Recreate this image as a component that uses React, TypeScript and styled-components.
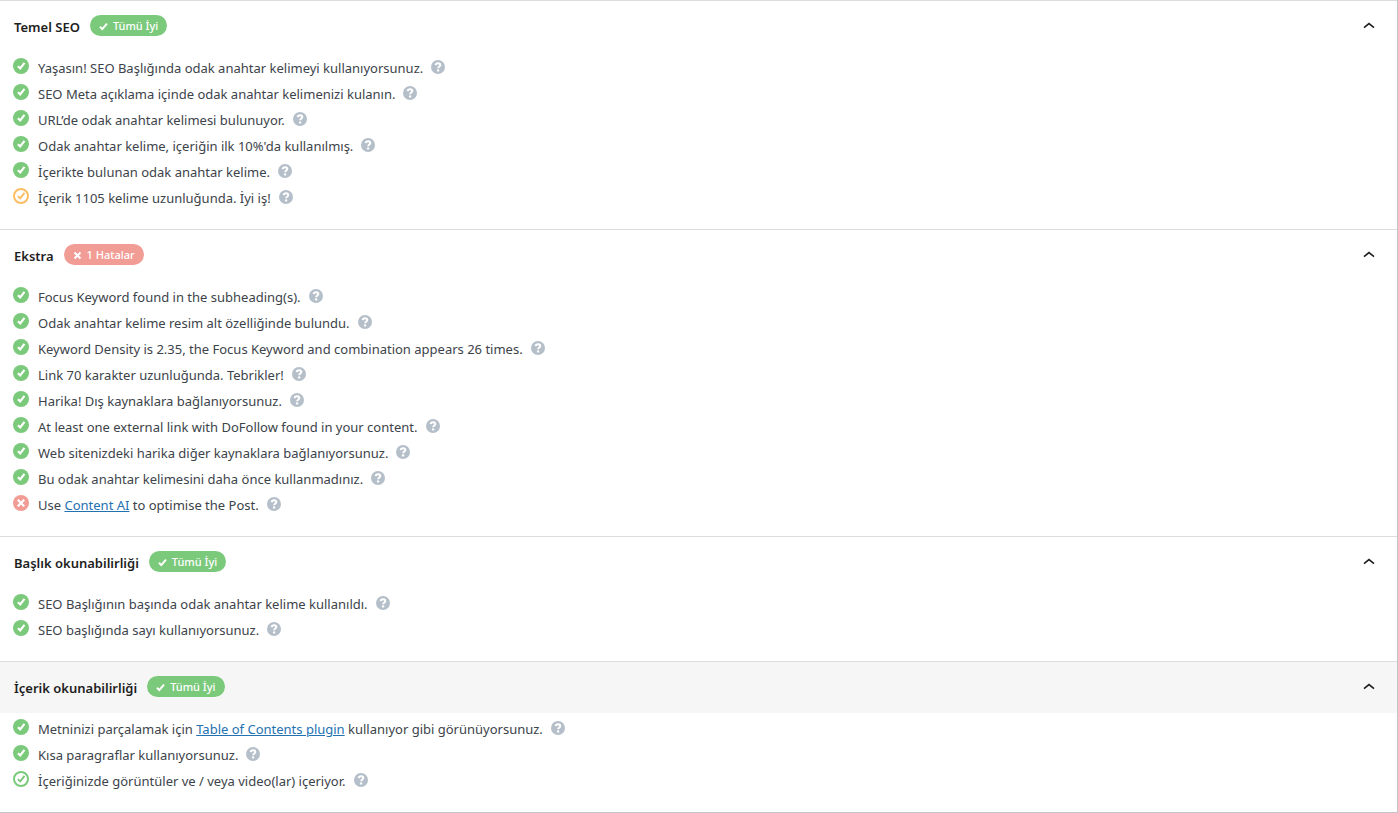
import React, { useState } from "react";
import styled, { createGlobalStyle } from "styled-components";

type Status = "ok" | "ok-outline" | "warn-outline" | "fail";

const colors = {
  green: "#7bc97b",
  orange: "#fdbd63",
  red: "#f29c96",
  help: "#b5bfc9",
  link: "#2271b1",
};

const GlobalStyle = createGlobalStyle`
  * { box-sizing: border-box; }
  body {
    margin: 0;
    background: #f0f0f1;
    color: #3c434a;
    font-family: "Segoe UI", "Noto Sans", "Open Sans", sans-serif;
    font-size: 13px;
  }
`;

const Panel = styled.main`
  background: #fff;
  border-right: 1px solid #c3c4c7;
  border-bottom: 1px solid #c3c4c7;
`;

const Section = styled.section`
  border-top: 1px solid #dcdcde;
`;

const Heading = styled.h2`
  margin: 0;
  font: inherit;
`;

const Toggle = styled.button<{ $active?: boolean }>`
  display: flex;
  align-items: center;
  gap: 10px;
  width: 100%;
  height: 51px;
  padding: 0 22px 2px 14px;
  border: 0;
  background: ${(p) => (p.$active ? "#f6f6f6" : "transparent")};
  color: #1e1e1e;
  font: inherit;
  text-align: left;
  cursor: pointer;
`;

const Title = styled.span`
  padding-top: 2px;
  font-weight: 600;
  line-height: 20px;
`;

const Badge = styled.span<{ $bad?: boolean }>`
  display: inline-flex;
  align-items: center;
  gap: 5px;
  height: 21px;
  padding: 0 9px;
  border-radius: 11px;
  background: ${(p) => (p.$bad ? colors.red : colors.green)};
  color: #fff;
  font-size: 11px;
  font-weight: 500;
  line-height: 21px;
`;

const BadgeIcon = styled.svg`
  margin-top: 2px;
`;

const Chevron = styled.svg<{ $open: boolean }>`
  margin-left: auto;
  transform: ${(p) => (p.$open ? "none" : "rotate(180deg)")};
`;

const List = styled.ul`
  margin: 0;
  padding: 2px 13px 19px;
  list-style: none;
`;

const Row = styled.li`
  display: flex;
  align-items: center;
  height: 26px;
`;

const StatusSvg = styled.svg`
  flex: none;
  margin: 0 9px 2px 0;
`;

const Message = styled.span`
  padding-top: 2px;
  line-height: 20px;
`;

const TextLink = styled.a`
  color: ${colors.link};
  text-decoration: underline;
`;

const Help = styled.a`
  display: flex;
  margin-left: 8px;
`;

const CHECK = "M4.9 8.2 7.2 10.4 11.5 4.8";

function StatusIcon({ status }: { status: Status }) {
  if (status === "ok" || status === "fail") {
    return (
      <StatusSvg width="16" height="16" viewBox="0 0 16 16" aria-hidden="true">
        <circle cx="8" cy="8" r="8" fill={status === "ok" ? colors.green : colors.red} />
        <path
          d={status === "ok" ? CHECK : "M4.8 4.8l6.4 6.4M11.2 4.8l-6.4 6.4"}
          fill="none"
          stroke="#fff"
          strokeWidth="2.2"
        />
      </StatusSvg>
    );
  }
  const tone = status === "ok-outline" ? colors.green : colors.orange;
  return (
    <StatusSvg width="16" height="16" viewBox="0 0 16 16" aria-hidden="true">
      <circle cx="8" cy="8" r="7" fill="none" stroke={tone} strokeWidth="2" />
      <path d={CHECK} fill="none" stroke={tone} strokeWidth="1.9" />
    </StatusSvg>
  );
}

function HelpIcon() {
  return (
    <svg width="14" height="14" viewBox="0 0 14 14" aria-hidden="true">
      <circle cx="7" cy="7" r="7" fill={colors.help} />
      <path
        d="M4.7 5.2C4.8 3.9 5.8 3.3 7.1 3.3c1.3 0 2.2.6 2.2 1.7 0 1.5-2.1 1.6-2.1 3.3"
        fill="none"
        stroke="#fff"
        strokeWidth="2"
      />
      <circle cx="7.1" cy="10.4" r="1.2" fill="#fff" />
    </svg>
  );
}

interface Item {
  status: Status;
  text: React.ReactNode;
}

interface Group {
  title: string;
  badge: string;
  bad?: boolean;
  active?: boolean;
  items: Item[];
}

const ok = (text: React.ReactNode): Item => ({ status: "ok", text });

const groups: Group[] = [
  {
    title: "Temel SEO",
    badge: "Tümü İyi",
    items: [
      ok("Yaşasın! SEO Başlığında odak anahtar kelimeyi kullanıyorsunuz."),
      ok("SEO Meta açıklama içinde odak anahtar kelimenizi kulanın."),
      ok("URL’de odak anahtar kelimesi bulunuyor."),
      ok("Odak anahtar kelime, içeriğin ilk 10%'da kullanılmış."),
      ok("İçerikte bulunan odak anahtar kelime."),
      { status: "warn-outline", text: "İçerik 1105 kelime uzunluğunda. İyi iş!" },
    ],
  },
  {
    title: "Ekstra",
    badge: "1 Hatalar",
    bad: true,
    items: [
      ok("Focus Keyword found in the subheading(s)."),
      ok("Odak anahtar kelime resim alt özelliğinde bulundu."),
      ok("Keyword Density is 2.35, the Focus Keyword and combination appears 26 times."),
      ok("Link 70 karakter uzunluğunda. Tebrikler!"),
      ok("Harika! Dış kaynaklara bağlanıyorsunuz."),
      ok("At least one external link with DoFollow found in your content."),
      ok("Web sitenizdeki harika diğer kaynaklara bağlanıyorsunuz."),
      ok("Bu odak anahtar kelimesini daha önce kullanmadınız."),
      {
        status: "fail",
        text: (
          <>
            Use <TextLink href="#content-ai">Content AI</TextLink> to optimise the Post.
          </>
        ),
      },
    ],
  },
  {
    title: "Başlık okunabilirliği",
    badge: "Tümü İyi",
    items: [
      ok("SEO Başlığının başında odak anahtar kelime kullanıldı."),
      ok("SEO başlığında sayı kullanıyorsunuz."),
    ],
  },
  {
    title: "İçerik okunabilirliği",
    badge: "Tümü İyi",
    active: true,
    items: [
      ok(
        <>
          Metninizi parçalamak için <TextLink href="#toc">Table of Contents plugin</TextLink> kullanıyor
          gibi görünüyorsunuz.
        </>
      ),
      ok("Kısa paragraflar kullanıyorsunuz."),
      { status: "ok-outline", text: "İçeriğinizde görüntüler ve / veya video(lar) içeriyor." },
    ],
  },
];

function GroupSection({ group }: { group: Group }) {
  const [open, setOpen] = useState(true);
  return (
    <Section>
      <Heading>
        <Toggle type="button" $active={group.active} aria-expanded={open} onClick={() => setOpen(!open)}>
          <Title>{group.title}</Title>
          <Badge $bad={group.bad}>
            <BadgeIcon width="9" height="9" viewBox="0 0 9 9" aria-hidden="true">
              <path
                d={group.bad ? "M1.5 1.5l6 6M7.5 1.5l-6 6" : "M1 4.8l2.3 2.3L8 1.6"}
                fill="none"
                stroke="#fff"
                strokeWidth="2"
              />
            </BadgeIcon>
            {group.badge}
          </Badge>
          <Chevron $open={open} width="12" height="8" viewBox="0 0 12 8" aria-hidden="true">
            <path d="M1 5.6 6 1.6l5 4" fill="none" stroke="#1e1e1e" strokeWidth="1.6" />
          </Chevron>
        </Toggle>
      </Heading>
      {open && (
        <List>
          {group.items.map((item, i) => (
            <Row key={i}>
              <StatusIcon status={item.status} />
              <Message>{item.text}</Message>
              <Help href="#help" aria-label="Yardım">
                <HelpIcon />
              </Help>
            </Row>
          ))}
        </List>
      )}
    </Section>
  );
}

export default function App() {
  return (
    <>
      <GlobalStyle />
      <Panel>
        {groups.map((g) => (
          <GroupSection key={g.title} group={g} />
        ))}
      </Panel>
    </>
  );
}
